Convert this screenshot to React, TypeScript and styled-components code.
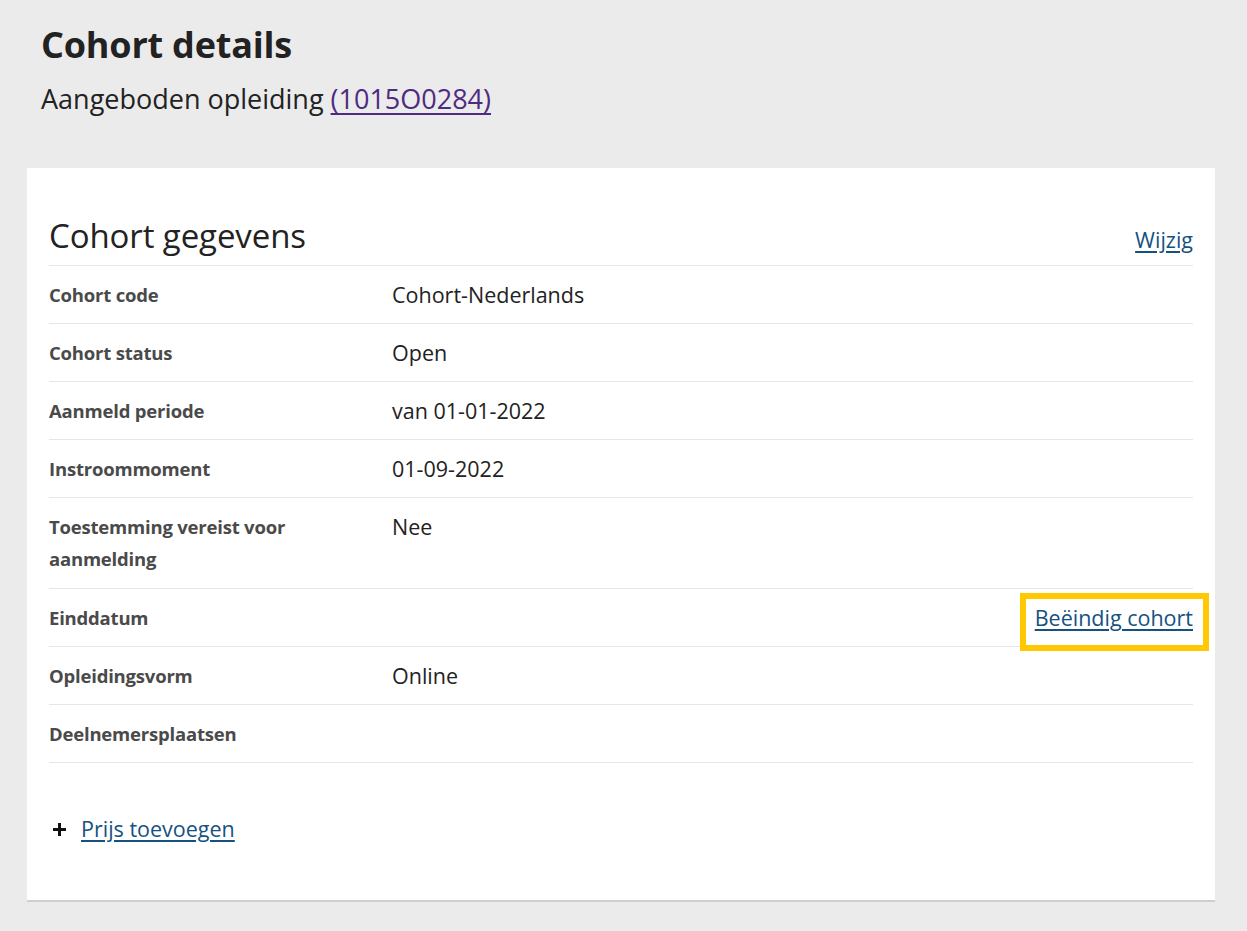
import React from 'react';
import styled, { createGlobalStyle } from 'styled-components';

const GlobalStyle = createGlobalStyle`
    html, body {
        margin:0;
        padding:0;
        background:#ebebeb;
        font-family:"Open Sans", "Noto Sans", Arial, sans-serif;
        color:#222;
    }
`

const Page = styled.main`
    padding:24px 32px 32px 27px;
    width:1188px;
`

const Header = styled.header`
    padding:0 0 0 14px;
    margin-bottom:50px;
`

const Title = styled.h1`
    margin:0;
    font-size:36px;
    line-height:42px;
    font-weight:700;
    letter-spacing:-0.2px;
    color:#222;
`

const Subtitle = styled.p`
    margin:14px 0 0;
    font-size:27px;
    line-height:38px;
    color:#222;
`

const VisitedLink = styled.a`
    color:#4f2a82;
    text-decoration:underline;
    text-underline-offset:4px;
    text-decoration-thickness:2px;
`

const Card = styled.section`
    background:#fff;
    padding:48px 22px 55px;
    box-shadow:0 2px 0 #cfcfcf;
`

const CardHead = styled.div`
    display:flex;
    justify-content:space-between;
    align-items:flex-end;
    padding-bottom:9px;
    border-bottom:1px solid #e6e6e6;
`

const CardTitle = styled.h2`
    margin:0;
    font-size:33px;
    line-height:40px;
    font-weight:400;
    letter-spacing:-0.1px;
    color:#222;
`

const Link = styled.a<{ focused?: boolean }>`
    color:#15527f;
    font-size:21.5px;
    line-height:32px;
    text-decoration:underline;
    text-underline-offset:3px;
    ${(props) => props.focused && `
        display:block;
        padding:3px 10px 11px 9px;
        margin:-3px -10px -11px 0;
        outline:6px solid #ffc800;
        background:#fff;
        position:relative;
        z-index:1;
    `}
`

const Rows = styled.dl`
    margin:0;
`

const Row = styled.div<{ tall?: boolean }>`
    display:grid;
    grid-template-columns:343px 1fr auto;
    padding:13px 0 ${(props) => (props.tall ? 13 : 12)}px;
    border-bottom:1px solid #e6e6e6;
`

const Label = styled.dt`
    font-size:18.5px;
    line-height:32px;
    font-weight:700;
    color:#4a4a4a;
    letter-spacing:-0.2px;
    padding-right:60px;
`

const Value = styled.dd`
    margin:0;
    font-size:21.5px;
    line-height:32px;
    color:#222;
`

const Action = styled.div`
    display:flex;
    justify-content:flex-end;
    align-items:flex-start;
`

const AddRow = styled.div`
    display:flex;
    align-items:center;
    gap:14px;
    margin-top:50px;
    padding-left:3px;
`

const PlusIcon = () => (
    <svg width="15" height="15" viewBox="0 0 15 15" aria-hidden="true">
        <path d="M7.5 1v13M1 7.5h13" stroke="#111" strokeWidth="3" />
    </svg>
)

const rows = [
    { label: 'Cohort code', value: 'Cohort-Nederlands' },
    { label: 'Cohort status', value: 'Open' },
    { label: 'Aanmeld periode', value: 'van 01-01-2022' },
    { label: 'Instroommoment', value: '01-09-2022' },
    { label: 'Toestemming vereist voor aanmelding', value: 'Nee', tall: true },
    { label: 'Einddatum', value: '', action: 'Beëindig cohort' },
    { label: 'Opleidingsvorm', value: 'Online' },
    { label: 'Deelnemersplaatsen', value: '' },
]

export default function App() {
    return (
        <>
            <GlobalStyle />
            <Page>
                <Header>
                    <Title>Cohort details</Title>
                    <Subtitle>
                        Aangeboden opleiding <VisitedLink href="#">(1015O0284)</VisitedLink>
                    </Subtitle>
                </Header>
                <Card>
                    <CardHead>
                        <CardTitle>Cohort gegevens</CardTitle>
                        <Link href="#">Wijzig</Link>
                    </CardHead>
                    <Rows>
                        {rows.map((row) => (
                            <Row key={row.label} tall={row.tall}>
                                <Label>{row.label}</Label>
                                <Value>{row.value}</Value>
                                <Action>
                                    {row.action && <Link href="#" focused>{row.action}</Link>}
                                </Action>
                            </Row>
                        ))}
                    </Rows>
                    <AddRow>
                        <PlusIcon />
                        <Link href="#">Prijs toevoegen</Link>
                    </AddRow>
                </Card>
            </Page>
        </>
    )
}
